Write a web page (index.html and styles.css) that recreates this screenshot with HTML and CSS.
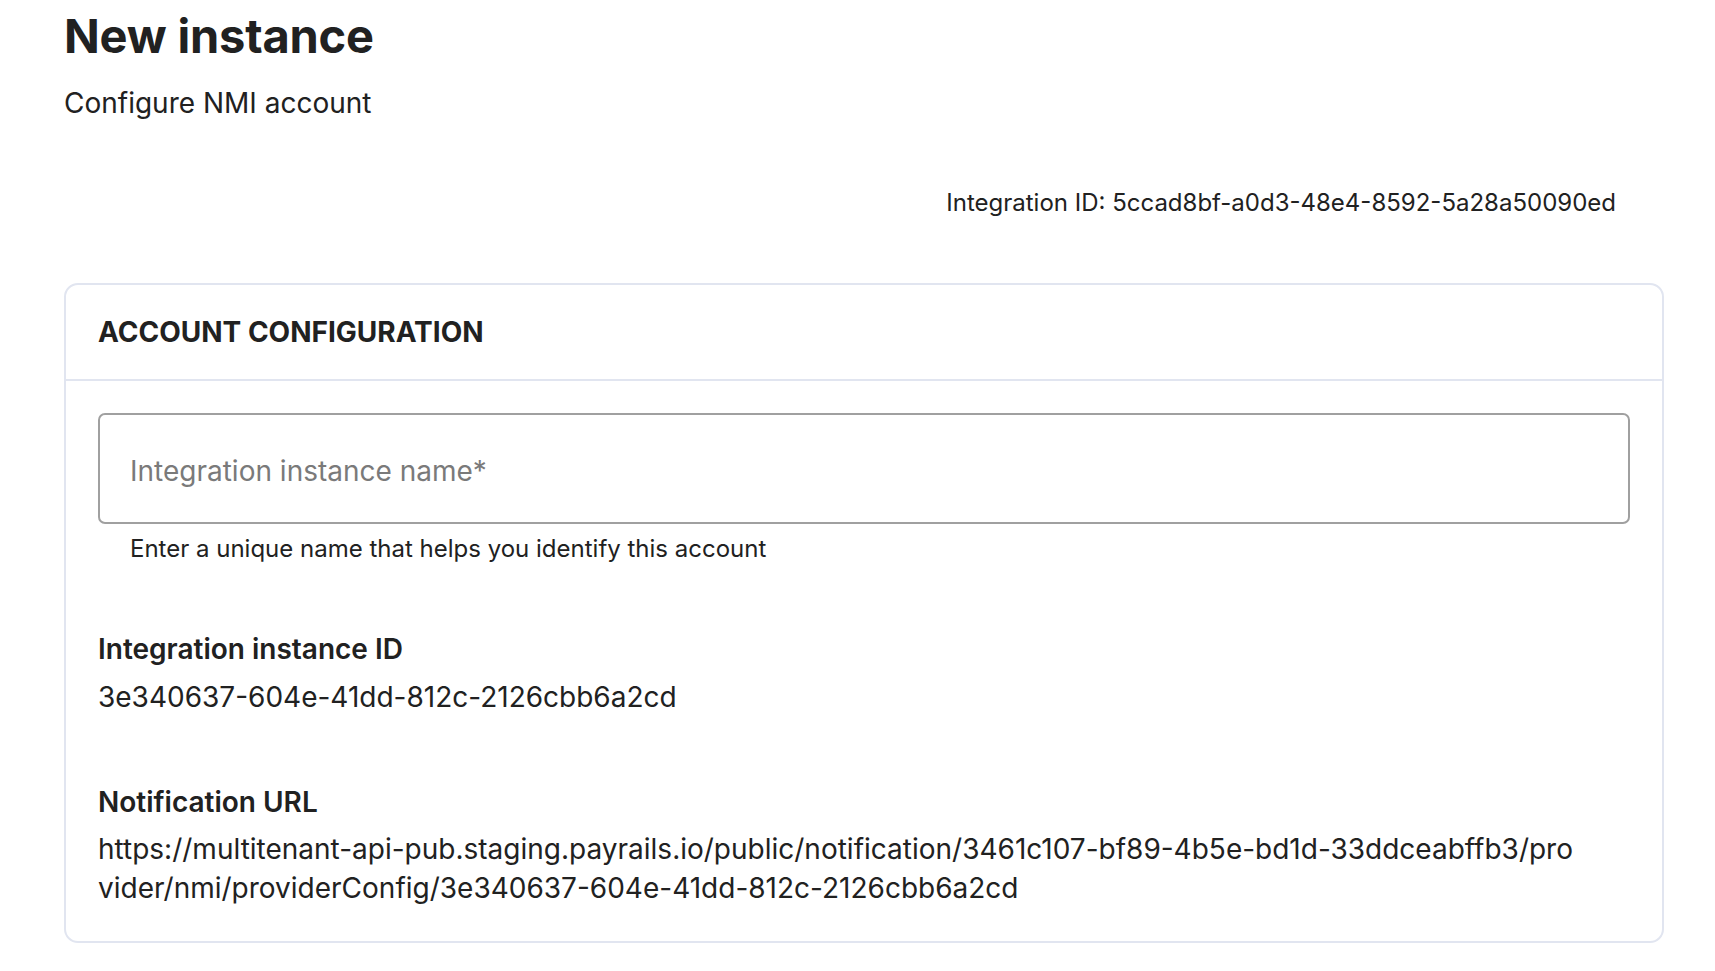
FILE: index.html
```html
<!DOCTYPE html>
<html lang="en">
<head>
<meta charset="utf-8">
<title>New instance</title>
<link rel="stylesheet" href="styles.css">
</head>
<body>
<main class="page">
  <header class="page-head">
    <h1 class="title">New instance</h1>
    <p class="subtitle">Configure NMI account</p>
    <p class="integration-id">Integration ID: 5ccad8bf-a0d3-48e4-8592-5a28a50090ed</p>
  </header>

  <section class="card">
    <div class="card-head">
      <h2 class="card-title">ACCOUNT CONFIGURATION</h2>
    </div>
    <div class="card-body">
      <div class="field">
        <input class="field-input" type="text" placeholder="Integration instance name*">
        <p class="field-help">Enter a unique name that helps you identify this account</p>
      </div>

      <div class="info">
        <h3 class="info-label">Integration instance ID</h3>
        <p class="info-value">3e340637-604e-41dd-812c-2126cbb6a2cd</p>
      </div>

      <div class="info">
        <h3 class="info-label">Notification URL</h3>
        <p class="info-value url">https://multitenant-api-pub.staging.payrails.io/public/notification/3461c107-bf89-4b5e-bd1d-33ddceabffb3/provider/nmi/providerConfig/3e340637-604e-41dd-812c-2126cbb6a2cd</p>
      </div>
    </div>
  </section>
</main>
</body>
</html>
```

FILE: styles.css
```css
* {
  box-sizing: border-box;
}

html, body {
  margin: 0;
  padding: 0;
  background: #ffffff;
}

body {
  font-family: Inter, "Noto Sans", "Liberation Sans", sans-serif;
  color: #212121;
}

.page {
  padding: 9px 51px 0 64px;
}

.page-head {
  display: flex;
  flex-direction: column;
}

.title {
  margin: 0;
  font-size: 47px;
  line-height: 54px;
  font-weight: 700;
  letter-spacing: -0.2px;
  color: #212121;
}

.subtitle {
  margin: 20px 0 0;
  font-size: 28px;
  line-height: 40px;
  font-weight: 400;
}

.integration-id {
  margin: 60px 0 0;
  align-self: flex-end;
  padding-right: 48px;
  font-size: 24px;
  line-height: 40px;
}

.card {
  margin-top: 60px;
  border: 2px solid #e1e5f0;
  border-radius: 14px;
  background: #ffffff;
}

.card-head {
  padding: 27px 32px 27px;
  border-bottom: 2px solid #e1e5f0;
}

.card-title {
  margin: 0;
  font-size: 28px;
  line-height: 40px;
  font-weight: 700;
}

.card-body {
  padding: 32px 32px 33px;
}

.field {
  display: flex;
  flex-direction: column;
}

.field-input {
  width: 100%;
  height: 111px;
  padding: 5px 30px 0;
  border: 2px solid #a0a0a0;
  border-radius: 7px;
  font-family: inherit;
  font-size: 28px;
  color: #212121;
  background: #ffffff;
  outline: none;
}

.field-input::placeholder {
  color: #7a7a7a;
  opacity: 1;
}

.field-help {
  margin: 10px 0 0 32px;
  font-size: 24px;
  line-height: 30px;
  color: #212121;
}

.info {
  margin-top: 65px;
}

.info-label {
  margin: 0;
  font-size: 28px;
  line-height: 40px;
  font-weight: 600;
}

.info-value {
  margin: 8px 0 0;
  font-size: 28px;
  line-height: 40px;
}

.url {
  max-width: 1490px;
  line-height: 39px;
  word-break: break-all;
}
```
